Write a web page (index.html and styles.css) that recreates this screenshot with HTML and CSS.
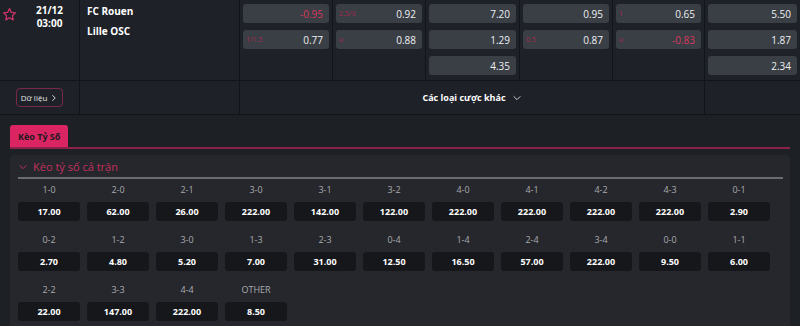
FILE: index.html
```html
<!DOCTYPE html>
<html lang="vi">
<head>
    <meta charset="UTF-8">
    <title>Kèo Tỷ Số</title>
    <link rel="stylesheet" href="styles.css">
</head>
<body>
    <section class="match">
        <div class="match-row">
            <div class="cell cell-time">
                <svg class="star" viewBox="0 0 24 24" width="15" height="15">
                    <path d="M12 2.5l2.9 6.1 6.6.8-4.9 4.6 1.3 6.6L12 17.3l-5.9 3.3 1.3-6.6-4.9-4.6 6.6-.8z" fill="none" stroke="#d0336a" stroke-width="2" stroke-linejoin="round"/>
                </svg>
                <div class="time">21/12<br>03:00</div>
            </div>
            <div class="cell cell-teams">
                <div class="team">FC Rouen</div>
                <div class="team">Lille OSC</div>
            </div>
            <div class="cell odds">
                <div class="odd"><span class="tag"></span><span class="val neg">-0.95</span></div>
                <div class="odd"><span class="tag">1/1.5</span><span class="val">0.77</span></div>
            </div>
            <div class="cell odds">
                <div class="odd"><span class="tag">2.5/3</span><span class="val">0.92</span></div>
                <div class="odd"><span class="tag">u</span><span class="val">0.88</span></div>
            </div>
            <div class="cell odds">
                <div class="odd"><span class="tag"></span><span class="val">7.20</span></div>
                <div class="odd"><span class="tag"></span><span class="val">1.29</span></div>
                <div class="odd"><span class="tag"></span><span class="val">4.35</span></div>
            </div>
            <div class="cell odds">
                <div class="odd"><span class="tag"></span><span class="val">0.95</span></div>
                <div class="odd"><span class="tag">0.5</span><span class="val">0.87</span></div>
            </div>
            <div class="cell odds">
                <div class="odd"><span class="tag">1</span><span class="val">0.65</span></div>
                <div class="odd"><span class="tag">u</span><span class="val neg">-0.83</span></div>
            </div>
            <div class="cell odds last">
                <div class="odd"><span class="tag"></span><span class="val">5.50</span></div>
                <div class="odd"><span class="tag"></span><span class="val">1.87</span></div>
                <div class="odd"><span class="tag"></span><span class="val">2.34</span></div>
            </div>
        </div>
        <div class="match-row sub-row">
            <div class="cell cell-data">
                <button class="data-btn">Dữ liệu
                    <svg viewBox="0 0 10 10" width="8" height="8"><path d="M3 1.5l3.5 3.5L3 8.5" fill="none" stroke="#ddd" stroke-width="1.2"/></svg>
                </button>
            </div>
            <div class="cell"></div>
            <div class="cell cell-more">
                <span>Các loại cược khác</span>
                <svg viewBox="0 0 12 12" width="10" height="10"><path d="M2 4l4 4 4-4" fill="none" stroke="#ccc" stroke-width="1.2"/></svg>
            </div>
            <div class="cell last"></div>
        </div>
    </section>

    <section class="bets">
        <div class="tabs">
            <div class="tab">Kèo Tỷ Số</div>
        </div>
        <div class="panel">
            <div class="panel-title">
                <svg viewBox="0 0 12 12" width="10" height="10"><path d="M2 4l4 4 4-4" fill="none" stroke="#c2305f" stroke-width="1.2"/></svg>
                <span>Kèo tỷ số cả trận</span>
            </div>
            <div class="score-grid" id="score-grid"></div>
        </div>
    </section>

    <script>
        var scores = [
            ['1-0', '17.00'], ['2-0', '62.00'], ['2-1', '26.00'], ['3-0', '222.00'], ['3-1', '142.00'], ['3-2', '122.00'],
            ['4-0', '222.00'], ['4-1', '222.00'], ['4-2', '222.00'], ['4-3', '222.00'], ['0-1', '2.90'],
            ['0-2', '2.70'], ['1-2', '4.80'], ['3-0', '5.20'], ['1-3', '7.00'], ['2-3', '31.00'], ['0-4', '12.50'],
            ['1-4', '16.50'], ['2-4', '57.00'], ['3-4', '222.00'], ['0-0', '9.50'], ['1-1', '6.00'],
            ['2-2', '22.00'], ['3-3', '147.00'], ['4-4', '222.00'], ['OTHER', '8.50']
        ];
        var grid = document.getElementById('score-grid');
        scores.forEach(function (s) {
            var item = document.createElement('div');
            item.className = 'score';
            item.innerHTML = '<div class="score-label">' + s[0] + '</div><div class="score-val">' + s[1] + '</div>';
            grid.appendChild(item);
        });
    </script>
</body>
</html>
```

FILE: styles.css
```css
body {
    margin: 0;
    background-color: #1d2025;
    font-family: "Open Sans", "Noto Sans", Arial, sans-serif;
    color: #fff;
    width: 800px;
    height: 326px;
    overflow: hidden;
}

.match {
    background-color: #1e2228;
}

.match-row {
    display: grid;
    grid-template-columns: 80px 160px 93px 93px 94px 93px 92px 95px;
    border-bottom: 1px solid #111418;
}

.sub-row {
    grid-template-columns: 80px 160px 465px 95px;
    height: 33px;
}

.cell {
    border-right: 1px solid #111418;
    box-sizing: border-box;
}

.cell.last {
    border-right: none;
}

.cell-time {
    position: relative;
    height: 80px;
}

.star {
    position: absolute;
    left: 2px;
    top: 7px;
}

.time {
    text-align: center;
    padding-left: 20px;
    padding-top: 4px;
    font-size: 10px;
    font-weight: 700;
    line-height: 13px;
}

.cell-teams {
    padding: 3px 7px;
}

.team {
    font-size: 10px;
    font-weight: 700;
    line-height: 16px;
    margin-bottom: 4px;
}

.odds {
    display: flex;
    flex-direction: column;
    gap: 7px;
    padding: 4px 3px 0 3px;
}

.odd {
    display: flex;
    justify-content: space-between;
    align-items: center;
    height: 19px;
    padding: 0 6px 0 3px;
    background-color: #3a3e45;
    border-radius: 3px;
}

.tag {
    font-size: 7px;
    color: #a9284f;
}

.val {
    font-size: 10px;
    color: #eef0f2;
}

.val.neg {
    color: #d8385e;
}

.cell-data {
    display: flex;
    align-items: center;
    padding-left: 16px;
}

.data-btn {
    display: flex;
    align-items: center;
    justify-content: center;
    gap: 3px;
    width: 47px;
    height: 19px;
    padding: 0;
    background: transparent;
    border: 1px solid #7a2847;
    border-radius: 4px;
    color: #e4e4e4;
    font-family: inherit;
    font-size: 8px;
}

.cell-more {
    display: flex;
    align-items: center;
    justify-content: center;
    gap: 6px;
    font-size: 9px;
    font-weight: 700;
}

.bets {
    padding: 10px 10px 0 10px;
}

.tabs {
    display: flex;
    border-bottom: 2px solid #8c2249;
}

.tab {
    background-color: #db2562;
    color: #1a1a1e;
    font-size: 9px;
    font-weight: 700;
    padding: 5px 8px 4px;
    border-radius: 3px 3px 0 0;
}

.panel {
    margin-top: 6px;
    background-color: #26272c;
    border-radius: 5px 5px 0 0;
    padding: 4px 7px 20px 8px;
    width: 780px;
    box-sizing: border-box;
}

.panel-title {
    display: flex;
    align-items: center;
    gap: 5px;
    padding: 0 0 3px 0;
    color: #c2305f;
    font-size: 11px;
    border-bottom: 2px solid #6b6c70;
}

.score-grid {
    display: grid;
    grid-template-columns: repeat(11, 62px);
    column-gap: 7px;
    row-gap: 12px;
    margin-top: 4px;
}

.score {
    display: flex;
    flex-direction: column;
    align-items: center;
    gap: 6px;
}

.score-label {
    font-size: 9px;
    color: #a9aaae;
    line-height: 13px;
}

.score-val {
    width: 100%;
    height: 19px;
    line-height: 19px;
    text-align: center;
    background-color: #16171b;
    border-radius: 3px;
    font-size: 9px;
    font-weight: 700;
}
```
